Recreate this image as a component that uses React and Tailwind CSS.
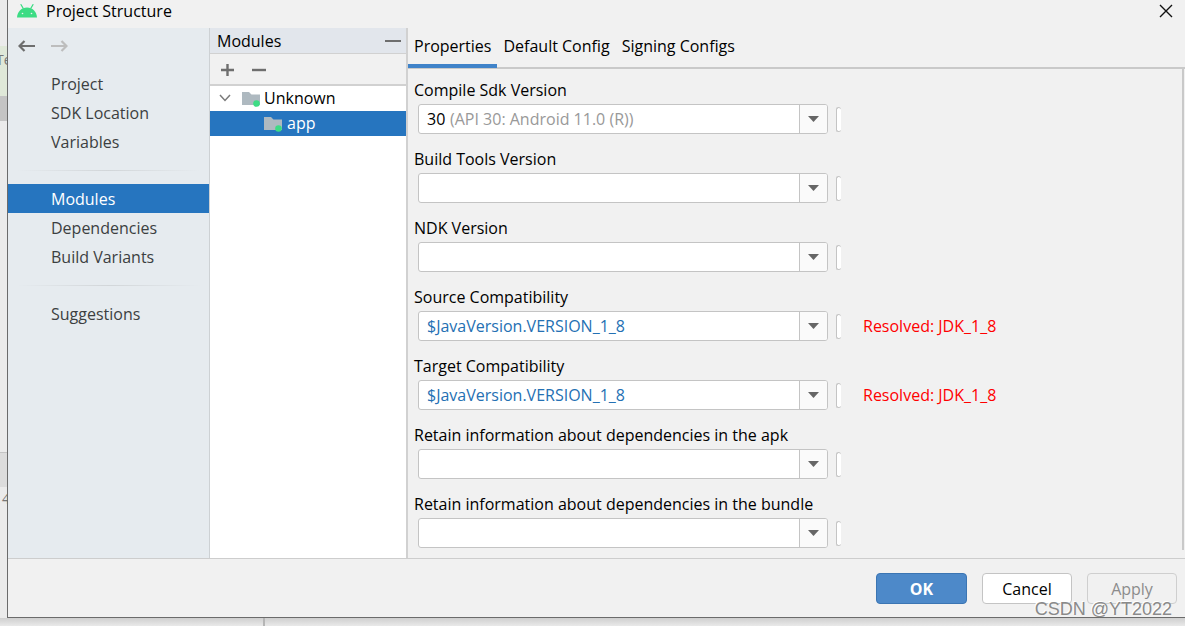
import React from "react";

const fields = [
  { id: "compile-sdk", label: "Compile Sdk Version", value: "30", hint: "(API 30: Android 11.0 (R))" },
  { id: "build-tools", label: "Build Tools Version" },
  { id: "ndk", label: "NDK Version" },
  { id: "source-compat", label: "Source Compatibility", value: "$JavaVersion.VERSION_1_8", variable: true, resolved: "Resolved: JDK_1_8" },
  { id: "target-compat", label: "Target Compatibility", value: "$JavaVersion.VERSION_1_8", variable: true, resolved: "Resolved: JDK_1_8" },
  { id: "retain-apk", label: "Retain information about dependencies in the apk" },
  { id: "retain-bundle", label: "Retain information about dependencies in the bundle" },
];

function AndroidLogo() {
  return (
    <svg width="20" height="14" viewBox="0 0 20 14" aria-hidden="true">
      <path d="M4 .6 6.200 4.400M16 .6 13.800 4.400" stroke="#3ddc84" strokeWidth="1.100" strokeLinecap="round" />
      <path d="M0 13.500C.4 7.600 4.600 3.600 10 3.600S19.600 7.600 20 13.500Z" fill="#3ddc84" />
      <circle cx="5.500" cy="9.500" r=".8" fill="#f1f1f1" />
      <circle cx="14.500" cy="9.500" r=".8" fill="#f1f1f1" />
    </svg>
  );
}

function FolderIcon() {
  return (
    <svg width="19" height="16" viewBox="0 0 19 16" aria-hidden="true">
      <path d="M0 0H7L9.500 2.500H18V13H0Z" fill="#aeb9c0" />
      <circle cx="14.500" cy="11.500" r="3.300" fill="#3ddc84" />
    </svg>
  );
}

function Arrow({ back }) {
  return (
    <svg width="17" height="12" viewBox="0 0 17 12" fill="none" strokeWidth="2.200" aria-hidden="true"
      className={back ? "stroke-[#6e6e6e]" : "stroke-[#bdbdbd]"}>
      <path d={back ? "M17 6H1.500M6.500 1 1.500 6 6.500 11" : "M0 6H15.500M10.500 1 15.500 6 10.500 11"} />
    </svg>
  );
}

function NavItem({ children, active }) {
  return (
    <a href="#" aria-current={active ? "page" : undefined}
      className={"flex h-[29px] items-center pl-[43px] " + (active ? "bg-[#2675bf] text-white" : "text-[#3c3f41]")}>
      {children}
    </a>
  );
}

function NavDivider() {
  return (
    <div className="flex h-7 items-center px-2">
      <div className="h-px flex-1 bg-linear-to-r from-transparent via-[#d2d6d9] to-transparent" />
    </div>
  );
}

function Field({ id, label, value, hint, variable, resolved }) {
  return (
    <div className="flex flex-col">
      <label htmlFor={id} className="flex h-7 items-center pl-[6px]">{label}</label>
      <div className="flex h-[30px] items-center pl-[10px]">
        <div className="flex h-[30px] w-[410px] overflow-hidden rounded-[3px] border border-[#c4c4c4] bg-white">
          <div className="flex flex-1 items-center gap-1 pl-2">
            <input id={id} defaultValue={value}
              className={"h-full bg-transparent outline-none " + (hint ? "w-[19px] " : "w-full ") + (variable ? "text-[#2470b3]" : "text-black")} />
            {hint && <span className="whitespace-nowrap text-[#999999]">{hint}</span>}
          </div>
          <button aria-label={"Show options for " + label}
            className="flex w-7 items-center justify-center border-l border-[#c4c4c4] bg-[#fafafa]">
            <svg width="11" height="6" viewBox="0 0 11 6" aria-hidden="true"><path d="M0 0H11L5.500 6Z" fill="#666666" /></svg>
          </button>
        </div>
        <button aria-label={"Variables for " + label}
          className="ml-2 h-[25px] w-[5px] rounded-[3px] border border-r-0 border-[#c4c4c4] bg-white" />
        {resolved && <span className="ml-[22px] text-[#ff0000]">{resolved}</span>}
      </div>
    </div>
  );
}

export default function App() {
  return (
    <div className="flex min-h-screen flex-col bg-[#e6e6e6] font-['Open_Sans','Noto_Sans_CJK_SC',sans-serif] text-base leading-5 text-black">
      <div className="flex flex-1">
        <div className="flex w-[7px] flex-col overflow-hidden bg-[#ebebeb] text-sm text-[#777777]">
          <div className="mt-[46px] h-[50px] bg-[#dfe8d8] pt-1"><span className="-ml-1">Te</span></div>
          <div className="h-[25px] bg-[#c4c4c4]" />
          <div className="mt-[331px] h-[35px] border-t border-[#c4c4c4] bg-[#dcdcdc]" />
          <div className="pl-[2px] pt-[2px]">4</div>
        </div>

        <main className="flex flex-1 flex-col border-b border-l border-[#6b6b6b] bg-[#f1f1f1]">
          <header className="flex h-7 items-start justify-between pl-[9px] pr-3">
            <div className="flex items-center gap-[9px]">
              <AndroidLogo />
              <h1 className="leading-[22px]">Project Structure</h1>
            </div>
            <button aria-label="Close" className="pt-1">
              <svg width="14" height="14" viewBox="0 0 14 14" stroke="#111111" strokeWidth="1.400" aria-hidden="true"><path d="M1 1 13 13M13 1 1 13" /></svg>
            </button>
          </header>

          <div className="flex flex-1 border-b border-[#cdcdcd]">
            <nav className="w-[202px] border-r border-[#cdd1d4] bg-[#e6ebef]">
              <div className="flex h-[41px] items-start gap-4 pl-[10px] pt-3">
                <button aria-label="Back"><Arrow back /></button>
                <button aria-label="Forward" disabled><Arrow /></button>
              </div>
              <NavItem>Project</NavItem>
              <NavItem>SDK Location</NavItem>
              <NavItem>Variables</NavItem>
              <NavDivider />
              <NavItem active>Modules</NavItem>
              <NavItem>Dependencies</NavItem>
              <NavItem>Build Variants</NavItem>
              <NavDivider />
              <NavItem>Suggestions</NavItem>
            </nav>

            <section className="w-[198px] border-r-2 border-[#d1d1d1] bg-white">
              <div className="flex h-[26px] items-center justify-between border-b border-[#d1d1d1] bg-[#e2e6ec] pl-[7px] pr-[5px]">
                <h2>Modules</h2>
                <button aria-label="Hide" className="py-2"><div className="h-[2px] w-4 bg-[#6e6e6e]" /></button>
              </div>
              <div className="flex h-8 items-center gap-[18px] border-b-2 border-[#d1d1d1] bg-[#f1f1f1] pl-[11px]">
                <button aria-label="Add module">
                  <svg width="13" height="14" viewBox="0 0 13 14" stroke="#6e6e6e" strokeWidth="2.400" aria-hidden="true"><path d="M6.500 2V14M0 8H13" /></svg>
                </button>
                <button aria-label="Remove module">
                  <svg width="14" height="14" viewBox="0 0 14 14" stroke="#6e6e6e" strokeWidth="2.400" aria-hidden="true"><path d="M0 8H14" /></svg>
                </button>
              </div>
              <ul role="tree">
                <li role="treeitem" aria-expanded="true" className="flex h-[25px] items-center pb-[2px] pl-[9px]">
                  <svg width="12" height="8" viewBox="0 0 12 8" fill="none" stroke="#7a7a7a" strokeWidth="1.500" aria-hidden="true"><path d="M1 1 6 6.500 11 1" /></svg>
                  <span className="ml-[11px] mr-[3px] pt-1"><FolderIcon /></span>
                  Unknown
                </li>
                <li role="treeitem" aria-selected="true" className="flex h-[25px] items-center bg-[#2675bf] pb-[2px] pl-[54px] text-white">
                  <span className="mr-1 pt-1"><FolderIcon /></span>
                  app
                </li>
              </ul>
            </section>

            <section className="flex flex-1 flex-col">
              <div role="tablist" className="flex h-[41px] border-b-2 border-[#c9c9c9]">
                <button role="tab" aria-selected="true" className="-mb-px border-b-4 border-[#4083c9] px-[6px]">Properties</button>
                <button role="tab" aria-selected="false" className="-mb-px border-b-4 border-transparent px-[6px]">Default Config</button>
                <button role="tab" aria-selected="false" className="-mb-px border-b-4 border-transparent px-[6px]">Signing Configs</button>
              </div>
              <div className="mb-2 mr-px flex flex-1 flex-col gap-[11px] border-r-2 border-[#c9c9c9] pt-[7px]">
                {fields.map((field) => <Field key={field.id} {...field} />)}
              </div>
            </section>
          </div>

          <footer className="relative flex h-[58px] items-start justify-end gap-[15px] pr-2 pt-[14px]">
            <button className="h-[31px] w-[91px] rounded-[4px] border border-[#3b75b3] bg-[#4d89c9] font-bold text-white">OK</button>
            <button className="h-[31px] w-[90px] rounded-[4px] border border-[#c4c4c4] bg-white">Cancel</button>
            <button disabled className="h-[31px] w-[90px] rounded-[4px] border border-[#cfcfcf] text-[#8c8c8c]">Apply</button>
            <span className="pointer-events-none absolute bottom-0 right-[13px] font-['Liberation_Sans',sans-serif] text-[18px] leading-4 text-[#8a8a8a] [text-shadow:-1px_-1px_0_#ffffff]">CSDN @YT2022</span>
          </footer>
        </main>
      </div>
      <div className="flex h-2 bg-linear-to-b from-[#cfcfcf] to-[#e9e9e9]">
        <div className="w-[265px] border-r-2 border-[#b5b5b5]" />
      </div>
    </div>
  );
}
